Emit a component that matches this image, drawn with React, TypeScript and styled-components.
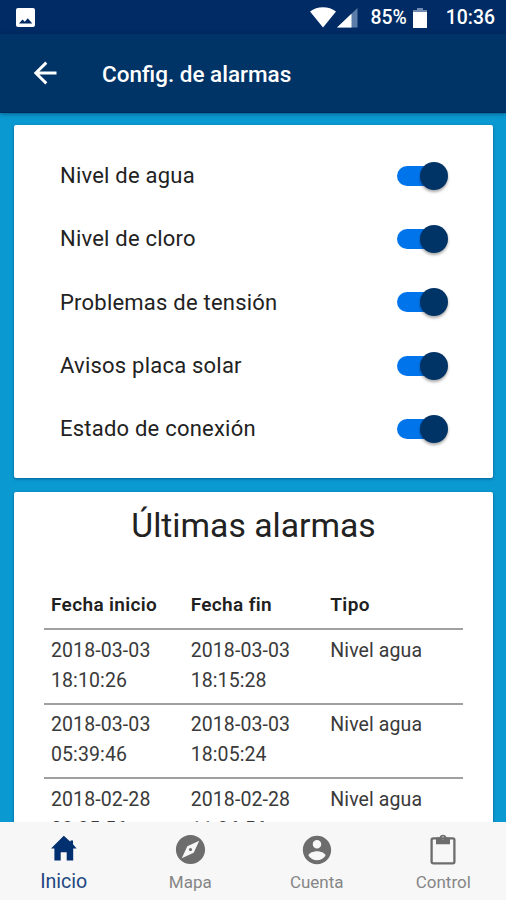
import React from 'react';
import styled, { createGlobalStyle } from 'styled-components';

const GlobalStyle = createGlobalStyle`
  * { box-sizing: border-box; }
  body { margin: 0; font-family: Roboto, sans-serif; }
`;

const Screen = styled.div`
  width: 506px;
  height: 900px;
  display: flex;
  flex-direction: column;
  overflow: hidden;
  background: #0a9ad1;
`;

const StatusBar = styled.div`
  flex: none;
  height: 34px;
  padding: 1px 11px 0 15px;
  display: flex;
  align-items: center;
  background: #002b64;
  color: #fff;
  font-size: 19.4px;
  font-weight: 500;
  line-height: 22px;
  svg { display: block; flex: none; }
`;

const Spacer = styled.div`
  flex: 1;
`;

const Battery = styled.span`
  padding-top: 1px;
  margin: 0 5px 0 12px;
`;

const Clock = styled.span`
  padding-top: 1px;
  margin-left: 18px;
`;

const Header = styled.header`
  flex: none;
  height: 79px;
  padding-left: 31px;
  display: flex;
  align-items: center;
  background: #003366;
  border-bottom: 1px solid #002a5c;
  color: #fff;
  z-index: 1;
  box-shadow: 0 1px 4px rgba(0, 30, 70, 0.5);
`;

const HeaderTitle = styled.h1`
  margin: 2px 0 0 43px;
  font-size: 22.5px;
  font-weight: 500;
  line-height: 28px;
  white-space: nowrap;
`;

const Content = styled.main`
  flex: 1;
  min-height: 0;
  overflow: hidden;
  padding: 12px 13px 0 14px;
  display: flex;
  flex-direction: column;
  gap: 14px;
`;

const Card = styled.section`
  flex: none;
  background: #fff;
  border-radius: 2px;
  box-shadow: 0 1px 3px rgba(0, 45, 95, 0.55);
  color: #222;
`;

const SettingsCard = styled(Card)`
  height: 353px;
  padding: 19px 45px 0 46px;
`;

const SettingRow = styled.div`
  height: 63.3px;
  display: flex;
  align-items: center;
  justify-content: space-between;
  font-size: 22px;
  letter-spacing: 0.22px;
  white-space: nowrap;
`;

const Switch = styled.span`
  width: 51px;
  height: 28px;
  display: flex;
  align-items: center;
`;

const SwitchTrack = styled.span`
  flex: none;
  width: 40px;
  height: 20px;
  background: #0075eb;
  border-radius: 10px;
`;

const Thumb = styled.span`
  flex: none;
  width: 28px;
  height: 28px;
  margin-left: -17px;
  border-radius: 50%;
  background: #003366;
  box-shadow: 0 2px 3px rgba(0, 0, 0, 0.35);
`;

const AlarmsCard = styled(Card)`
  height: 420px;
  padding: 12px 30px 0;
`;

const SectionTitle = styled.h2`
  margin: 0 0 48px;
  line-height: 44px;
  font-size: 33.7px;
  font-weight: 400;
  text-align: center;
  white-space: nowrap;
`;

const Row = styled.div<{ $head?: boolean }>`
  display: grid;
  grid-template-columns: repeat(3, 1fr);
  height: ${(p) => (p.$head ? '34px' : '74.6px')};
  padding: ${(p) => (p.$head ? '0' : '5.8px')} 0 0;
  border-bottom: 2px solid #a0a0a0;
  font-size: ${(p) => (p.$head ? '19px' : '19.5px')};
  letter-spacing: ${(p) => (p.$head ? '0.35px' : '0.1px')};
  font-weight: ${(p) => (p.$head ? 600 : 400)};
  line-height: ${(p) => (p.$head ? '18px' : '29.8px')};
  color: ${(p) => (p.$head ? '#202020' : '#3a3a3a')};
`;

const Cell = styled.div`
  padding-left: 7px;
  white-space: nowrap;
`;

const Line = styled.div``;

const TabBar = styled.nav`
  flex: none;
  height: 78px;
  display: grid;
  grid-template-columns: repeat(4, 1fr);
  background: #f7f7f7;
  z-index: 1;
`;

const Tab = styled.div<{ $active?: boolean }>`
  padding: 10px 0 0 1px;
  display: flex;
  flex-direction: column;
  align-items: center;
  color: ${(p) => (p.$active ? '#003070' : '#6d6d6d')};
  svg { display: block; flex: none; }
`;

const TabLabel = styled.span<{ $active?: boolean }>`
  margin-top: ${(p) => (p.$active ? '4px' : '4px')};
  font-size: ${(p) => (p.$active ? '19.6px' : '17px')};
  line-height: 22px;
  color: ${(p) => (p.$active ? '#1d4680' : '#858585')};
`;

const IconSlot = styled.span`
  height: 35px;
  display: flex;
  align-items: center;
`;

const HomeIcon = () => (
  <svg width="26" height="31" viewBox="0 0 26 31" fill="currentColor">
    <path d="M12.8 1.8 19.4 7.8V6.4H22v3.9l3.6 4.1h-3.4v12.2h-6.5v-8.3h-6v8.3H3.4V14.4H0z" />
  </svg>
);

const MapIcon = () => (
  <svg width="35" height="35" viewBox="0 0 24 24" fill="currentColor">
    <path d="M12 10.9c-.61 0-1.1.49-1.1 1.1s.49 1.1 1.1 1.1c.61 0 1.1-.49 1.1-1.1s-.49-1.1-1.1-1.1zM12 2C6.48 2 2 6.48 2 12s4.48 10 10 10 10-4.48 10-10S17.52 2 12 2zm2.19 12.19L6 18l3.81-8.19L18 6l-3.81 8.19z" />
  </svg>
);

const AccountIcon = () => (
  <svg width="34" height="34" viewBox="0 0 24 24" fill="currentColor">
    <path d="M12 2C6.48 2 2 6.48 2 12s4.48 10 10 10 10-4.48 10-10S17.52 2 12 2zm0 3c1.66 0 3 1.34 3 3s-1.34 3-3 3-3-1.34-3-3 1.34-3 3-3zm0 14.2c-2.5 0-4.71-1.28-6-3.22.03-1.99 4-3.08 6-3.08 1.99 0 5.97 1.09 6 3.08-1.29 1.94-3.5 3.22-6 3.22z" />
  </svg>
);

const ClipboardIcon = () => (
  <svg width="26" height="31" viewBox="0 0 26 31">
    <rect x="1.6" y="4.3" width="22.8" height="25" rx="1.6" fill="none" stroke="currentColor" strokeWidth="2.3" />
    <path
      d="M6 3.4h3.5a3.6 3.6 0 0 1 7 0H20v6.8H6zM13 2.6a1.4 1.4 0 1 0 0 2.8 1.4 1.4 0 0 0 0-2.8z"
      fill="currentColor"
      fillRule="evenodd"
    />
  </svg>
);

const tabs = [
  { Icon: HomeIcon, label: 'Inicio' },
  { Icon: MapIcon, label: 'Mapa' },
  { Icon: AccountIcon, label: 'Cuenta' },
  { Icon: ClipboardIcon, label: 'Control' },
];

const settings = [
  'Nivel de agua',
  'Nivel de cloro',
  'Problemas de tensión',
  'Avisos placa solar',
  'Estado de conexión',
];

const alarms = [
  { start: ['2018-03-03', '18:10:26'], end: ['2018-03-03', '18:15:28'], type: 'Nivel agua' },
  { start: ['2018-03-03', '05:39:46'], end: ['2018-03-03', '18:05:24'], type: 'Nivel agua' },
  { start: ['2018-02-28', '08:35:56'], end: ['2018-02-28', '11:36:56'], type: 'Nivel agua' },
];

export default function App() {
  return (
    <Screen>
      <GlobalStyle />
      <StatusBar>
        <svg width="21" height="21" viewBox="0 0 21 21">
          <rect x="1" y="1" width="19" height="19" rx="2" fill="#fff" />
          <path d="M4 16.5 7.5 12.5l2.3 2.3 3-3.6 4.5 5.3z" fill="#002b64" />
        </svg>
        <Spacer />
        <svg width="26" height="21" viewBox="0 0 26 21">
          <path d="M0 4.6C7-1.2 19-1.2 26 4.6L13 20.5z" fill="#fff" />
        </svg>
        <svg width="22" height="21" viewBox="0 0 22 21">
          <path d="M1 20.5 21.5 1v19.5z" fill="#5b7ba8" />
          <path d="M1 20.5 15.5 6.7v13.8z" fill="#fff" />
        </svg>
        <Battery>85%</Battery>
        <svg width="16" height="22" viewBox="0 0 16 22">
          <path d="M5 1h6v2h4v4H1V3h4z" fill="#6f8bb2" />
          <path d="M1 5h14v16H1z" fill="#fff" />
        </svg>
        <Clock>10:36</Clock>
      </StatusBar>
      <Header>
        <svg width="28" height="28" viewBox="0 0 28 28" fill="none" stroke="#fff" strokeWidth="2.9">
          <path d="M25.5 14H5M15.3 3.6 4.8 14l10.5 10.4" />
        </svg>
        <HeaderTitle>Config. de alarmas</HeaderTitle>
      </Header>
      <Content>
        <SettingsCard>
          {settings.map((label) => (
            <SettingRow key={label}>
              <span>{label}</span>
              <Switch role="switch" aria-checked="true" aria-label={label}>
                <SwitchTrack />
                <Thumb />
              </Switch>
            </SettingRow>
          ))}
        </SettingsCard>
        <AlarmsCard>
          <SectionTitle>Últimas alarmas</SectionTitle>
          <Row $head>
            <Cell>Fecha inicio</Cell>
            <Cell>Fecha fin</Cell>
            <Cell>Tipo</Cell>
          </Row>
          {alarms.map((a) => (
            <Row key={a.start.join(' ')}>
              <Cell>{a.start.map((t) => <Line key={t}>{t}</Line>)}</Cell>
              <Cell>{a.end.map((t) => <Line key={t}>{t}</Line>)}</Cell>
              <Cell>{a.type}</Cell>
            </Row>
          ))}
        </AlarmsCard>
      </Content>
      <TabBar>
        {tabs.map(({ Icon, label }, i) => (
          <Tab key={label} $active={i === 0}>
            <IconSlot>
              <Icon />
            </IconSlot>
            <TabLabel $active={i === 0}>{label}</TabLabel>
          </Tab>
        ))}
      </TabBar>
    </Screen>
  );
}
